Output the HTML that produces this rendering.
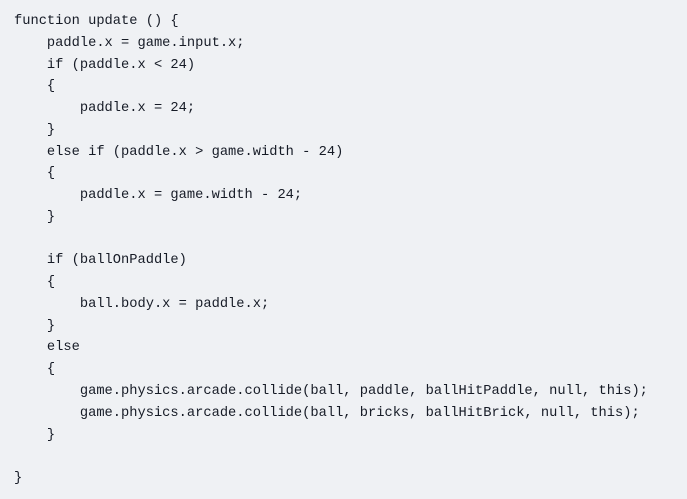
<!DOCTYPE html>
<html><head><style>
html,body{margin:0;padding:0;background:#eff1f4;width:687px;height:499px;overflow:hidden}
pre{margin:0;padding:11px 0 0 14px;font-family:"Liberation Mono",monospace;font-size:13.72px;line-height:21.77px;color:#161b26}
</style></head><body><pre>function update () {
    paddle.x = game.input.x;
    if (paddle.x &lt; 24)
    {
        paddle.x = 24;
    }
    else if (paddle.x &gt; game.width - 24)
    {
        paddle.x = game.width - 24;
    }

    if (ballOnPaddle)
    {
        ball.body.x = paddle.x;
    }
    else
    {
        game.physics.arcade.collide(ball, paddle, ballHitPaddle, null, this);
        game.physics.arcade.collide(ball, bricks, ballHitBrick, null, this);
    }

}</pre></body></html>
